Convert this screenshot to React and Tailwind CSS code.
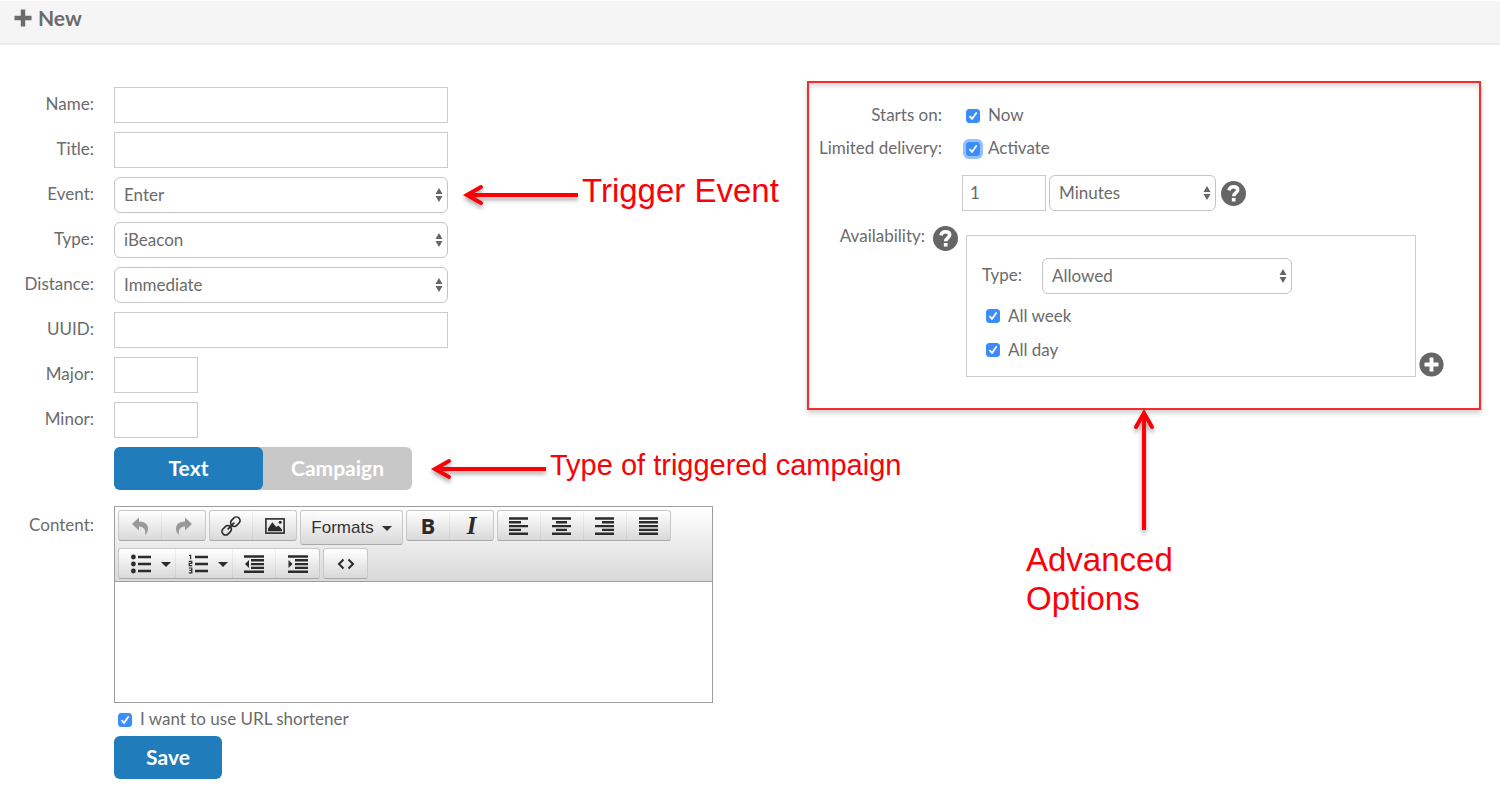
import { useState } from 'react';
import { FaPlusCircle } from 'react-icons/fa';

function PlusIcon() {
    return (
        <svg viewBox="0 0 18 18" className="h-[18px] w-[18px]" fill="none" stroke="currentColor" strokeWidth="4.4" strokeLinejoin="round" aria-hidden="true">
            <path d="M9 0.5 V17.5 M0.5 9 H17.5" />
        </svg>
    );
}

function HelpIcon({ className }) {
    return (
        <svg viewBox="0 0 24 24" className={`h-[25px] w-[25px] text-[#666] ${className}`} aria-hidden="true">
            <circle cx="12" cy="12" r="12" fill="currentColor" />
            <path d="M7.6 9 C8.2 6.8 9.8 5.5 12 5.5 C14.4 5.5 16 6.8 16 8.7 C16 11.4 12.2 11.4 12.2 14.6" fill="none" stroke="#fff" strokeWidth="3.4" />
            <path d="M10.4 16.3 h3.6 v3.4 h-3.6 Z" fill="#fff" />
        </svg>
    );
}

function TextField({ id, label, className = 'w-[334px]' }) {
    return (
        <div className="flex items-center gap-5">
            <label htmlFor={id} className="w-[94px] pb-[2px] text-right">{label}:</label>
            <input id={id} type="text" className={`h-9 border border-[#ccc] bg-white px-2 outline-none ${className}`} />
        </div>
    );
}

function Select({ id, label, options, className = 'w-[334px]' }) {
    return (
        <div className={`relative ${className}`}>
            <select id={id} aria-label={label} className="h-9 w-full appearance-none rounded-md border border-[#c4c4c4] bg-white pr-6 pb-px pl-[9px] outline-none">
                {options.map((option) => <option key={option}>{option}</option>)}
            </select>
            <svg viewBox="0 0 8 14" className="pointer-events-none absolute top-[11px] right-[5px] h-[14px] w-2" fill="#666" aria-hidden="true">
                <path d="M4 0 L7.5 6 H0.5 Z M4 14 L7.5 8 H0.5 Z" />
            </svg>
        </div>
    );
}

function SelectField({ id, label, options, children }) {
    return (
        <div className="flex items-center gap-5">
            <label htmlFor={id} className="w-[94px] pb-[2px] text-right">{label}:</label>
            <div className="flex items-center gap-4">
                <Select id={id} options={options} />
                {children}
            </div>
        </div>
    );
}

function Checkbox({ label, highlighted = false }) {
    const [checked, setChecked] = useState(true);

    return (
        <label className="flex items-center gap-2">
            <span className="relative h-[14px] w-[14px]">
                <input
                    type="checkbox"
                    checked={checked}
                    onChange={(e) => setChecked(e.target.checked)}
                    className={`block h-[14px] w-[14px] appearance-none rounded-[3px] border border-[#aaa] checked:border-[#3b8dfb] checked:bg-[#3b8dfb] ${highlighted ? 'ring-[3px] ring-[#93c1fb]' : ''}`}
                />
                {checked &&
                    <svg viewBox="0 0 14 14" className="pointer-events-none absolute inset-0 h-[14px] w-[14px]" fill="none" stroke="#fff" strokeWidth="1.8" strokeLinecap="round" strokeLinejoin="round" aria-hidden="true">
                        <path d="M4 7.6 L6 10 L10.2 4" />
                    </svg>
                }
            </span>
            <span className="pb-px">{label}</span>
        </label>
    );
}

function Callout({ children, className }) {
    return (
        <div className="flex items-center gap-1 whitespace-nowrap font-['Liberation_Sans',Arial,sans-serif] text-[#fb0007]">
            <svg viewBox="0 0 114 22" className="h-[22px] w-[114px] overflow-visible drop-shadow-[0_3px_2px_rgba(0,0,0,0.35)]" fill="none" stroke="#fb0007" strokeWidth="4" aria-hidden="true">
                <path d="M2 11 H114" />
                <path d="M17 3 L3 11 L17 19" strokeLinecap="round" />
            </svg>
            <span className={`pb-2 leading-7 ${className}`}>{children}</span>
        </div>
    );
}

function ToolGroup({ children }) {
    return (
        <div className="flex h-[31px] rounded-[3px] border border-[#c8c8c8] border-b-[#a9a9a9] bg-linear-to-b from-white to-[#d9d9d9] text-[#2b2b2b]">
            {children}
        </div>
    );
}

function Tool({ label, children, wide = false, disabled = false }) {
    return (
        <button
            type="button"
            aria-label={label}
            disabled={disabled}
            className={`flex h-full items-center justify-center gap-[10px] border-r border-black/5 last:border-r-0 disabled:text-[#999] ${wide ? 'w-[57px] pl-[7px]' : 'w-[43px]'}`}
        >
            {children}
        </button>
    );
}

function Caret() {
    return (
        <svg viewBox="0 0 10 5" className="mt-[2px] h-[5px] w-[10px]" fill="currentColor" aria-hidden="true">
            <path d="M0 0 H10 L5 5 Z" />
        </svg>
    );
}

function Icon({ children }) {
    return (
        <svg viewBox="0 0 20 20" className="h-5 w-5 shrink-0 overflow-visible" fill="currentColor" aria-hidden="true">
            {children}
        </svg>
    );
}

const UNDO_PATH = 'M2 8 L9 1.5 V5.5 C15 5.5 18 8.5 18 12.5 C18 15.5 17 17.5 15 19 C16 14 14 10.8 9 10.6 V14.5 Z';

function Toolbar() {
    return (
        <div className="flex flex-wrap items-start gap-[3px] border-b border-[#9e9e9e] bg-linear-to-b from-white to-[#d9d9d9] px-[3px] pt-[3px] pb-[2px]">
            <ToolGroup>
                <Tool label="Undo" disabled><Icon><path d={UNDO_PATH} /></Icon></Tool>
                <Tool label="Redo" disabled><Icon><path d={UNDO_PATH} transform="matrix(-1 0 0 1 20 0)" /></Icon></Tool>
            </ToolGroup>
            <ToolGroup>
                <Tool label="Insert link">
                    <Icon>
                        <g transform="rotate(-45 10 10)" fill="none" stroke="currentColor" strokeWidth="1.6">
                            <rect x="-1.2" y="6.4" width="10.2" height="7.2" rx="3.4" />
                            <rect x="11" y="6.4" width="10.2" height="7.2" rx="3.4" />
                            <path d="M6 10 H14" strokeWidth="1.8" strokeLinecap="round" />
                        </g>
                    </Icon>
                </Tool>
                <Tool label="Insert image">
                    <Icon>
                        <rect x="0.9" y="2.9" width="18.2" height="14.2" fill="none" stroke="currentColor" strokeWidth="1.6" />
                        <path d="M3 15.2 V12.5 L7.3 6.2 L11.2 11 L13.4 9.4 L17 13.5 V15.2 Z" />
                        <circle cx="15.2" cy="6.2" r="1.5" />
                    </Icon>
                </Tool>
            </ToolGroup>
            <button
                type="button"
                className="flex h-[35px] w-[103px] items-center justify-center gap-2 rounded-[3px] border border-[#c8c8c8] border-b-[#a9a9a9] bg-linear-to-b from-white to-[#d9d9d9] font-['Liberation_Sans',Arial,sans-serif] text-[17px] text-[#333]"
            >
                Formats <Caret />
            </button>
            <ToolGroup>
                <Tool label="Bold"><span className="pb-[2px] font-['Open_Sans',sans-serif] text-[22px] leading-none font-bold">B</span></Tool>
                <Tool label="Italic"><span className="font-['Liberation_Serif',serif] text-[25px] leading-none font-bold italic">I</span></Tool>
            </ToolGroup>
            <ToolGroup>
                <Tool label="Align left"><Icon><path d="M0 1.3h19v2.4H0z M0 5.1h12v2.4H0z M0 8.9h19v2.4H0z M0 12.7h12v2.4H0z M0 16.5h19v2.4H0z" /></Icon></Tool>
                <Tool label="Align center"><Icon><path d="M0 1.3h19v2.4H0z M4 5.1h11v2.4H4z M0 8.9h19v2.4H0z M4 12.7h11v2.4H4z M0 16.5h19v2.4H0z" /></Icon></Tool>
                <Tool label="Align right"><Icon><path d="M0 1.3h19v2.4H0z M7 5.1h12v2.4H7z M0 8.9h19v2.4H0z M7 12.7h12v2.4H7z M0 16.5h19v2.4H0z" /></Icon></Tool>
                <Tool label="Justify"><Icon><path d="M0 1.3h19v2.4H0z M0 5.1h19v2.4H0z M0 8.9h19v2.4H0z M0 12.7h19v2.4H0z M0 16.5h19v2.4H0z" /></Icon></Tool>
            </ToolGroup>
            <ToolGroup>
                <Tool label="Bullet list" wide>
                    <Icon>
                        <circle cx="2.4" cy="3" r="2.4" />
                        <circle cx="2.4" cy="10" r="2.4" />
                        <circle cx="2.4" cy="17" r="2.4" />
                        <path d="M7 1.8h13v2.4H7z M7 8.8h13v2.4H7z M7 15.8h13v2.4H7z" />
                    </Icon>
                    <Caret />
                </Tool>
                <Tool label="Numbered list" wide>
                    <Icon>
                        <path d="M7 1.8h13v2.4H7z M7 8.8h13v2.4H7z M7 15.8h13v2.4H7z" />
                        <path d="M1 1.3 H2.6 V5.2 M0.8 7.4 H3.8 V9.4 H1.2 V11.6 H4.2 M0.8 14 H3.8 V18.8 H0.8 M1.4 16.4 H3.8" fill="none" stroke="currentColor" strokeWidth="1.2" />
                    </Icon>
                    <Caret />
                </Tool>
                <Tool label="Decrease indent"><Icon><path d="M0 1.3h20v2.4H0z M7 5.1h13v2.4H7z M7 8.9h13v2.4H7z M7 12.7h13v2.4H7z M0 16.5h20v2.4H0z M5 6v8L1 10z" /></Icon></Tool>
                <Tool label="Increase indent"><Icon><path d="M0 1.3h20v2.4H0z M7 5.1h13v2.4H7z M7 8.9h13v2.4H7z M7 12.7h13v2.4H7z M0 16.5h20v2.4H0z M0.5 6v8L4.5 10z" /></Icon></Tool>
            </ToolGroup>
            <ToolGroup>
                <Tool label="Source code">
                    <Icon><path d="M7.5 5.5 L3 10 L7.5 14.5 M12.5 5.5 L17 10 L12.5 14.5" fill="none" stroke="currentColor" strokeWidth="2" /></Icon>
                </Tool>
            </ToolGroup>
        </div>
    );
}

function BeaconForm() {
    return (
        <form className="w-[807px] shrink-0 pt-[6px]" onSubmit={(e) => e.preventDefault()}>
            <div className="flex flex-col gap-[9px]">
                <TextField id="name" label="Name" />
                <TextField id="title" label="Title" />
                <SelectField id="event" label="Event" options={['Enter', 'Exit']}>
                    <Callout className="text-[33px]">Trigger Event</Callout>
                </SelectField>
                <SelectField id="type" label="Type" options={['iBeacon', 'Eddystone']} />
                <SelectField id="distance" label="Distance" options={['Immediate', 'Near', 'Far']} />
                <TextField id="uuid" label="UUID" />
                <TextField id="major" label="Major" className="w-[84px]" />
                <TextField id="minor" label="Minor" className="w-[84px]" />
                <div className="flex items-center gap-5 pl-[114px]">
                    <div className="flex rounded-md bg-[#c8c8c8] text-[21px] font-bold text-white">
                        <button type="button" className="h-[43px] w-[149px] rounded-md bg-[#207cba] pb-[2px]">Text</button>
                        <button type="button" className="h-[43px] w-[149px] rounded-md pb-[2px]">Campaign</button>
                    </div>
                    <Callout className="text-[29px]">Type of triggered campaign</Callout>
                </div>
            </div>

            <div className="mt-4 flex gap-5">
                <label htmlFor="content" className="w-[94px] pt-[9px] text-right">Content:</label>
                <div className="w-[599px] border border-[#9e9e9e]">
                    <Toolbar />
                    <textarea id="content" className="block h-[120px] w-full resize-none bg-white p-2 outline-none" />
                </div>
            </div>

            <div className="pl-[114px]">
                <div className="flex h-[33px] items-center pl-1">
                    <Checkbox label="I want to use URL shortener" />
                </div>
                <button type="submit" className="h-[43px] w-[108px] rounded-md bg-[#207cba] pb-[2px] text-[21px] font-bold text-white">Save</button>
            </div>
        </form>
    );
}

function AdvancedOptions() {
    return (
        <section className="mr-[19px] flex-1">
            <div className="border-2 border-[#fb2a2a] pt-4 pb-[31px] shadow-[0_3px_5px_rgba(0,0,0,0.2),inset_0_4px_4px_rgba(0,0,0,0.12)]">
                <div className="flex h-[33px] items-center gap-6">
                    <span className="w-[133px] pb-[2px] text-right">Starts on:</span>
                    <Checkbox label="Now" />
                </div>
                <div className="flex h-[33px] items-center gap-6">
                    <span className="w-[133px] pb-[2px] text-right">Limited delivery:</span>
                    <Checkbox label="Activate" highlighted />
                </div>
                <div className="mt-[10px] flex items-center pl-[153px]">
                    <input type="text" aria-label="Delivery limit" defaultValue="1" className="h-9 w-[84px] border border-[#ccc] px-[7px] pb-[2px] outline-none" />
                    <div className="ml-[3px]">
                        <Select id="unit" label="Delivery unit" options={['Minutes', 'Hours', 'Days']} className="w-[167px]" />
                    </div>
                    <HelpIcon className="ml-[5px]" />
                </div>
                <div className="mt-3 flex">
                    <span className="flex h-7 w-[116px] items-center justify-end pb-[2px]">Availability:</span>
                    <HelpIcon className="mx-2 mt-[3px]" />
                    <div className="mt-3 flex-1 border border-[#ccc] pt-[22px] pb-[9px] pl-[15px]">
                        <div className="flex items-center">
                            <label htmlFor="availability-type" className="w-[60px] pb-[2px]">Type:</label>
                            <Select id="availability-type" options={['Allowed', 'Denied']} className="w-[250px]" />
                        </div>
                        <div className="mt-[5px] pl-1">
                            <div className="flex h-[34px] items-center"><Checkbox label="All week" /></div>
                            <div className="flex h-[34px] items-center"><Checkbox label="All day" /></div>
                        </div>
                    </div>
                    <button type="button" aria-label="Add availability" className="mr-[35px] ml-[3px] self-end">
                        <FaPlusCircle className="h-[25px] w-[25px] text-[#666]" />
                    </button>
                </div>
            </div>

            <div className="flex flex-col items-center font-['Liberation_Sans',Arial,sans-serif] text-[33px] leading-[39px] text-[#fb0007]">
                <svg viewBox="0 0 22 120" className="h-[120px] w-[22px] overflow-visible drop-shadow-[0_3px_2px_rgba(0,0,0,0.35)]" fill="none" stroke="#fb0007" strokeWidth="4" aria-hidden="true">
                    <path d="M11 3 V120" />
                    <path d="M3 17 L11 3 L19 17" strokeLinecap="round" />
                </svg>
                <p className="mt-[10px] w-[236px]">Advanced<br />Options</p>
            </div>
        </section>
    );
}

export default function App() {
    return (
        <div className="min-h-screen bg-white pt-px font-[Lato,sans-serif] text-[17px] leading-5 text-[#6b6b6b]">
            <header className="flex h-11 items-center gap-[6px] border-b-2 border-[#ebebeb] bg-[#f5f5f5] px-[14px] pb-2">
                <PlusIcon />
                <h1 className="text-[21px] font-bold">New</h1>
            </header>
            <main className="flex pt-9">
                <BeaconForm />
                <AdvancedOptions />
            </main>
        </div>
    );
}
